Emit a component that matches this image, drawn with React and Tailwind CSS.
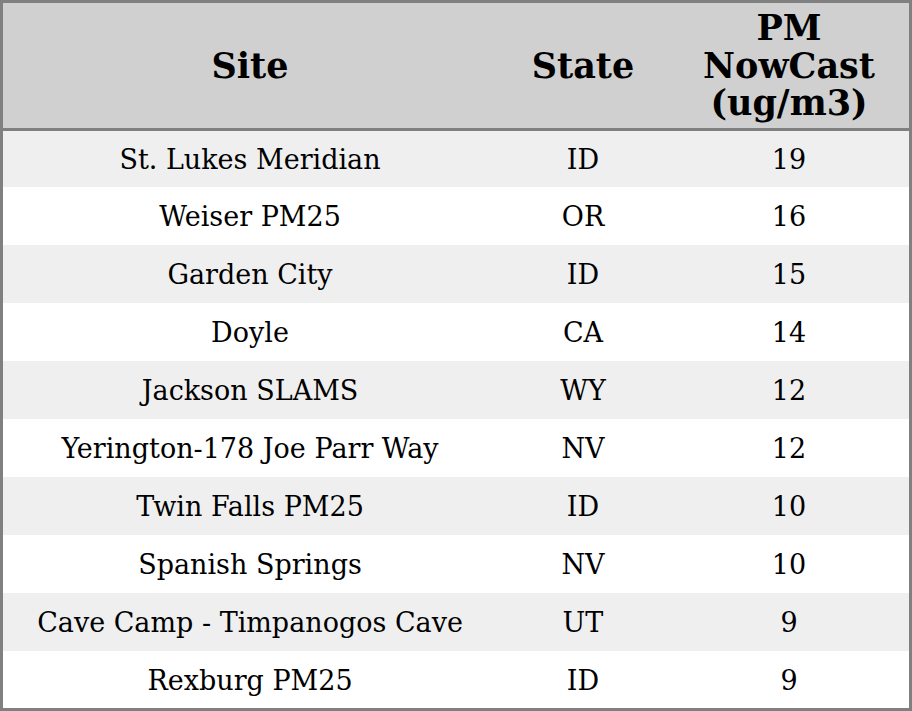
import React from 'react';

const ROWS = [
  ['St. Lukes Meridian', 'ID', '19'],
  ['Weiser PM25', 'OR', '16'],
  ['Garden City', 'ID', '15'],
  ['Doyle', 'CA', '14'],
  ['Jackson SLAMS', 'WY', '12'],
  ['Yerington-178 Joe Parr Way', 'NV', '12'],
  ['Twin Falls PM25', 'ID', '10'],
  ['Spanish Springs', 'NV', '10'],
  ['Cave Camp - Timpanogos Cave', 'UT', '9'],
  ['Rexburg PM25', 'ID', '9'],
];

export default function App() {
  return (
    <div className="w-[912px] h-[711px] border-[3px] border-[#808080] flex flex-col bg-white text-black font-['DejaVu_Serif',serif]">
      <div className="h-[125px] bg-[#d0d0d0] flex items-center font-bold text-[35px] leading-[37.5px] text-center">
        <div className="w-[494px]">Site</div>
        <div className="w-[172px]">State</div>
        <div className="w-[240px]">PM<br />NowCast<br />(ug/m3)</div>
      </div>
      <div className="h-[3px] bg-[#808080]" />
      {ROWS.map(([site, state, pm], i) => (
        <div
          key={i}
          className={`flex items-center text-center text-[27px] pt-[3px] ${i === 0 ? 'h-[56px]' : i === 9 ? 'flex-1' : 'h-[58px]'} ${i % 2 === 0 ? 'bg-[#efefef]' : 'bg-white'}`}
        >
          <div className="w-[494px]">{site}</div>
          <div className="w-[172px]">{state}</div>
          <div className="w-[240px]">{pm}</div>
        </div>
      ))}
    </div>
  );
}
